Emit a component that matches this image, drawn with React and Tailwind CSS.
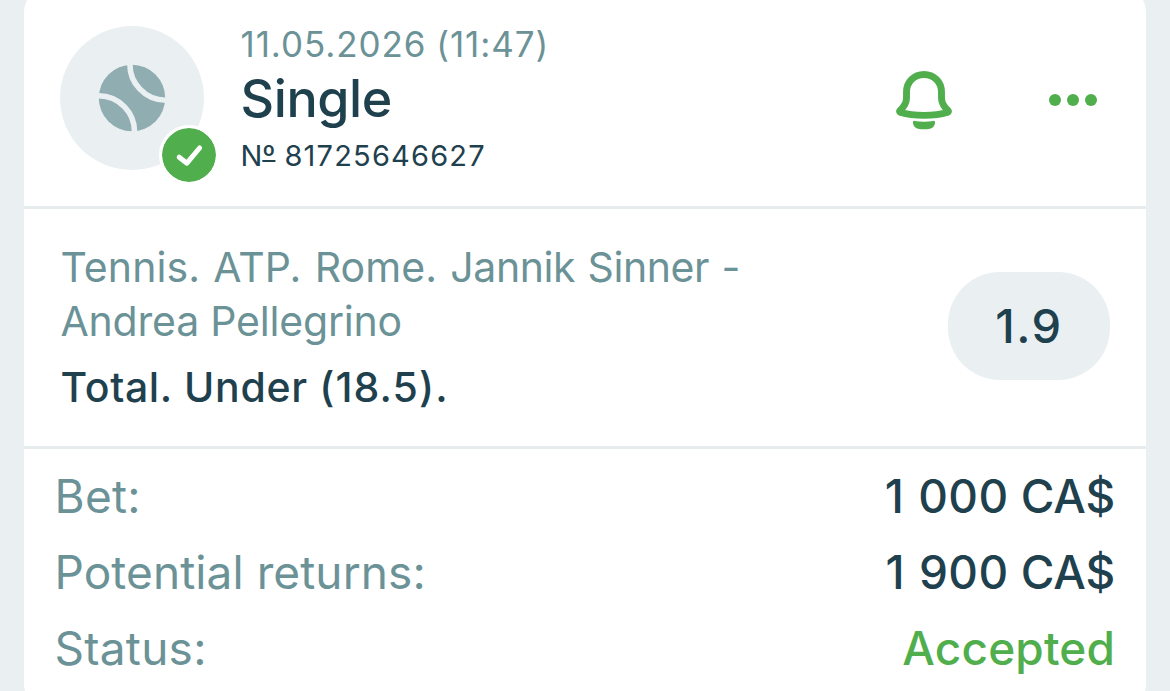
import React from "react";

function TennisBall() {
  return (
    <svg viewBox="0 0 68 68" className="size-[68px]" fill="none">
      <circle cx="34" cy="34" r="33.2" fill="#90adb1" />
      <path d="M32 -2A36 36 0 0 0 68 36.3M0 31.7A36 36 0 0 1 36.4 70" stroke="#eaeff2" strokeWidth="5.6" />
    </svg>
  );
}

function Check() {
  return (
    <svg viewBox="0 0 54 54" className="size-[54px]" fill="none">
      <path d="M17.2 29.2L24.9 35.2L37.6 20" stroke="#fff" strokeWidth="5" strokeLinecap="round" strokeLinejoin="round" />
    </svg>
  );
}

function Bell() {
  return (
    <svg viewBox="0 0 60 60" className="h-[60px] w-[60px]" fill="none">
      <path
        d="M30 4.5C20 4.5 12.5 12 12.5 22V28C12.5 33 9.6 37.2 5.9 40.6C5.3 41.2 5.4 42.1 6.2 42.3C13 44.4 21.5 45.4 30 45.4C38.5 45.4 47 44.4 53.8 42.3C54.6 42.1 54.7 41.2 54.1 40.6C50.4 37.2 47.5 33 47.5 28V22C47.5 12 40 4.5 30 4.5Z"
        stroke="#50ae4d"
        strokeWidth="6.9"
        strokeLinejoin="round"
      />
      <path d="M20.8 50.9C26.5 52 33.5 52 39.2 50.9C40.4 50.7 41.1 51.4 41 52.7C40.8 57 37.5 59.3 30 59.3C22.5 59.3 19.2 57 19 52.7C18.9 51.4 19.6 50.7 20.8 50.9Z" fill="#50ae4d" />
    </svg>
  );
}

function Row({ label, className, children }) {
  return (
    <div className="flex h-[76px] items-center justify-between leading-[76px]">
      <span className={className}>{label}</span>
      {children}
    </div>
  );
}

function Amount({ value, currency }) {
  return (
    <span className="font-medium">
      <span className="tracking-[0.4px] [word-spacing:1.4px]">{value}</span> <span className="-tracking-[0.2px]">{currency}</span>
    </span>
  );
}

export default function App() {
  return (
    <div className="h-[691px] overflow-hidden bg-[#eaeff2] px-6 font-[Inter,sans-serif] text-[#1f414e]">
      <main className="-mt-3 h-[720px] rounded-[24px] bg-white pt-3">
        <header className="flex h-[209px] border-b-[3px] border-[#e6ecee] pl-9">
          <div className="relative mt-[26px] flex size-36 items-center justify-center rounded-full bg-[#eaeff2]">
            <TennisBall />
            <span className="absolute -right-[15px] -bottom-[15px] rounded-full border-[3px] border-white bg-[#50ae4d] bg-clip-padding">
              <Check />
            </span>
          </div>
          <div className="ml-[36.5px] flex-1 pt-[23px] whitespace-nowrap">
            <div className="text-[35px] leading-[42px] tracking-[0.93px] [word-spacing:-1px] text-[#6b9296]">11.05.2026 (11:47)</div>
            <h1 className="mt-1 text-[52px] leading-[60px] font-[550] tracking-[-0.4px]">Single</h1>
            <div className="mt-[9px] flex text-[29px] leading-[36px]">
              <span>N</span>
              <span className="underline decoration-2 [text-decoration-skip-ink:none] [text-underline-offset:-6px]">º</span>
              <span className="ml-[9px] tracking-[1.2px]">81725646627</span>
            </div>
          </div>
          <div className="mt-[70px] flex h-[60px] items-center">
            <Bell />
            <div className="mr-[49px] ml-[95px] flex gap-1.5">
              <i className="size-3 rounded-full bg-[#50ae4d]" />
              <i className="size-3 rounded-full bg-[#50ae4d]" />
              <i className="size-3 rounded-full bg-[#50ae4d]" />
            </div>
          </div>
        </header>

        <section className="flex h-60 items-start justify-between border-b-[3px] border-[#e6ecee] pr-9 pl-[36.5px]">
          <div className="pt-[31px] text-[41px] leading-[54px] whitespace-nowrap">
            <p className="tracking-[-0.2px] text-[#6b9296]">
              <span className="tracking-[0.08px] [word-spacing:1.6px]">Tennis. ATP. Rome. </span>
              <span className="tracking-[-0.4px] [word-spacing:1.2px]">Jannik Sinner -</span>
              <br />
              Andrea Pellegrino
            </p>
            <p className="mt-[12px] font-[550] tracking-[0.65px]">
              Total. Under <span className="tracking-[1.1px]">(18.5).</span>
            </p>
          </div>
          <div className="mt-[63px] flex h-[108px] w-[162px] items-center justify-center rounded-[52px] bg-[#eaeff2] text-[47px] font-medium tracking-[1.5px]">
            1.9
          </div>
        </section>

        <section className="pt-[9px] pr-[31px] pl-[30.5px] text-[46px]">
          <Row label="Bet:" className="tracking-[0.3px] text-[#6b9296]">
            <Amount value="1 000" currency="CA$" />
          </Row>
          <Row label="Potential returns:" className="tracking-[0.08px] text-[#6b9296]">
            <Amount value="1 900" currency="CA$" />
          </Row>
          <Row label="Status:" className="tracking-[0.25px] text-[#6b9296]">
            <span className="font-medium tracking-[0.15px] text-[#50ae4d]">Accepted</span>
          </Row>
        </section>
      </main>
    </div>
  );
}
